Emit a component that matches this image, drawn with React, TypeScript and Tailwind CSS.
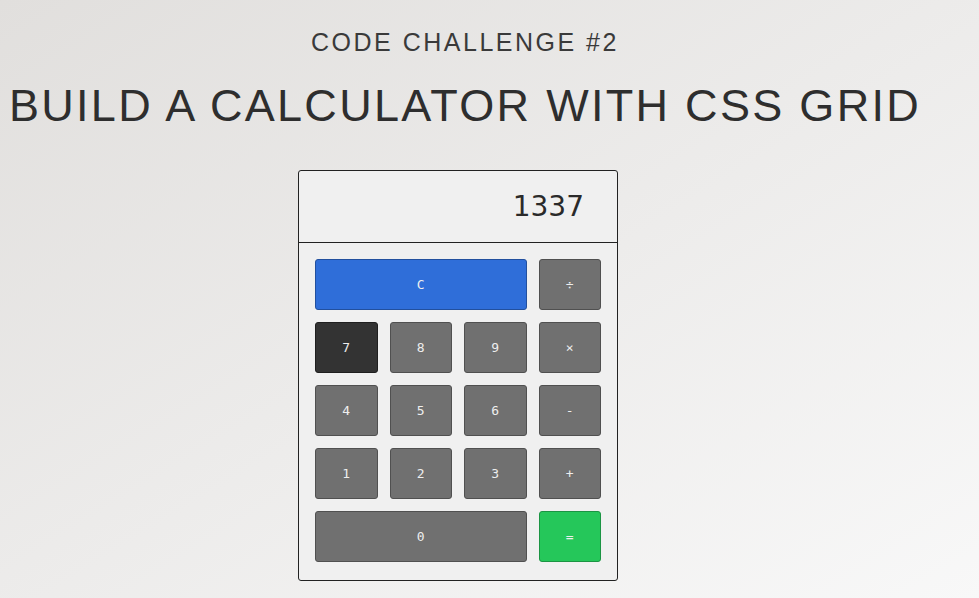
import React from "react";

type Key = { label: string; cls: string; span?: boolean };

const keys: Key[] = [
  { label: "C", cls: "bg-[#2f6ed9] border-[#22509e]", span: true },
  { label: "÷", cls: "bg-[#707070] border-[#505050]" },
  { label: "7", cls: "bg-[#333333] border-[#1f1f1f]" },
  { label: "8", cls: "bg-[#707070] border-[#505050]" },
  { label: "9", cls: "bg-[#707070] border-[#505050]" },
  { label: "×", cls: "bg-[#707070] border-[#505050]" },
  { label: "4", cls: "bg-[#707070] border-[#505050]" },
  { label: "5", cls: "bg-[#707070] border-[#505050]" },
  { label: "6", cls: "bg-[#707070] border-[#505050]" },
  { label: "-", cls: "bg-[#707070] border-[#505050]" },
  { label: "1", cls: "bg-[#707070] border-[#505050]" },
  { label: "2", cls: "bg-[#707070] border-[#505050]" },
  { label: "3", cls: "bg-[#707070] border-[#505050]" },
  { label: "+", cls: "bg-[#707070] border-[#505050]" },
  { label: "0", cls: "bg-[#707070] border-[#505050]", span: true },
  { label: "=", cls: "bg-[#25c75a] border-[#1b9443]" },
];

const App = () => {
  return (
    <div className="w-[979px] h-[598px] overflow-hidden bg-gradient-to-br from-[#e1dfdd] to-[#f8f8f8] font-['Liberation_Sans',Arial,sans-serif] text-[#333]">
      <div className="w-[930px] flex flex-col items-center pt-[27px]">
        <h3 className="text-[25px] leading-[30px] tracking-[2.5px] text-[#3a3a3a] whitespace-nowrap">
          CODE CHALLENGE #2
        </h3>
        <h1 className="mt-[22px] text-[45px] leading-[54px] tracking-[2.3px] text-[#2e2e2e] whitespace-nowrap">
          BUILD A CALCULATOR WITH CSS GRID
        </h1>

        <div className="mt-[37px] ml-[-14px] w-[320px] border border-[#222] rounded-[3px] bg-[#f0f0f0]">
          <div className="h-[72px] border-b border-[#222] flex items-center justify-end pr-[33px] text-[28px] text-[#2a2a2a] font-['DejaVu_Sans',sans-serif]">
            1337
          </div>
          <div className="grid grid-cols-4 gap-x-[12px] gap-y-[12px] auto-rows-[51px] p-[16px] pb-[18px]">
            {keys.map((k) => (
              <div
                key={k.label}
                className={`${k.cls} ${k.span ? "col-span-3" : ""} border rounded-[3px] flex items-center justify-center text-[13px] text-[#eeeeee] font-['DejaVu_Sans_Mono',monospace]`}
              >
                {k.label}
              </div>
            ))}
          </div>
        </div>
      </div>
    </div>
  );
};

export default App;
